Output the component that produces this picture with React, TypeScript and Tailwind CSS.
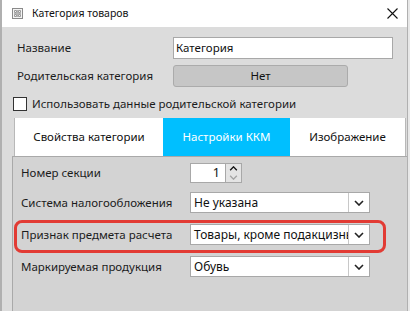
import type { ReactNode } from 'react';

// Category editor dialog — KKM settings tab, with a red annotation round one row.

const font = { fontFamily: '"Noto Sans", "Open Sans", sans-serif' };

function Chevron({ className = '' }: { className?: string }) {
  return (
    <svg width="10" height="6" viewBox="0 0 10 6" className={className} aria-hidden>
      <path d="M1 1 L5 5 L9 1" fill="none" stroke="currentColor" strokeWidth="1.6" />
    </svg>
  );
}

function Select({ value }: { value: string }) {
  return (
    <div className="flex h-[21px] w-[180px] items-stretch border border-[#a8a8a8] bg-white">
      <div className="flex-1 overflow-hidden whitespace-nowrap pl-[3px] text-[12px] leading-[19px] text-[#111]">
        {value}
      </div>
      <div className="flex w-[21px] items-center justify-center border-l border-[#c8c8c8] text-[#222]">
        <Chevron />
      </div>
    </div>
  );
}

function Row({ label, children, className = '' }: { label: string; children: ReactNode; className?: string }) {
  return (
    <div className={`flex items-center ${className}`}>
      <div className="w-[177px] whitespace-nowrap pl-[8px] text-[11.5px] text-[#1c1c1c]">{label}</div>
      {children}
    </div>
  );
}

export default function App() {
  return (
    <div className="flex h-[311px] w-[410px] overflow-hidden bg-[#e8e8e8]" style={font}>
      <div className="flex w-[408px] flex-col border-l-2 border-r border-[#b0b0b0] bg-[#dcdcdc]">
        {/* title bar */}
        <div className="flex h-[27px] items-center bg-white pl-[10px] pr-[9px]">
          <svg width="11" height="11" viewBox="0 0 11 11" aria-hidden>
            <rect x="0.5" y="0.5" width="10" height="10" fill="#f4f4f4" stroke="#8a8a8a" />
            <path d="M2.5 2.5h2v2h-2zM6.5 2.5h2v2h-2zM2.5 6.5h2v2h-2zM6.5 6.5h2v2h-2z" fill="none" stroke="#9a9a9a" />
            <path d="M5.5 2v7M2 5.5h7" stroke="#b5b5b5" />
          </svg>
          <span className="ml-[9px] text-[10.5px] text-[#111]">Категория товаров</span>
          <svg width="11" height="11" viewBox="0 0 11 11" className="ml-auto" aria-hidden>
            <path d="M0.5 0.5L10.5 10.5M10.5 0.5L0.5 10.5" stroke="#111" strokeWidth="1.1" />
          </svg>
        </div>

        {/* header fields */}
        <div className="flex flex-col pt-[10px]">
          <div className="flex h-[22px] items-center">
            <div className="w-[171px] whitespace-nowrap pl-[15px] text-[11.5px] text-[#1c1c1c]">Название</div>
            <div className="h-[22px] w-[220px] border border-[#a8a8a8] bg-white pl-[2px] text-[11.5px] leading-[19px] text-[#111]">
              Категория
            </div>
          </div>
          <div className="mt-[6px] flex h-[22px] items-center">
            <div className="w-[171px] whitespace-nowrap pl-[15px] text-[11.5px] text-[#1c1c1c]">Родительская категория</div>
            <div className="flex h-[22px] w-[175px] items-center justify-center rounded-[3px] border border-[#ababab] bg-[#c6c6c6] text-[11.5px] text-[#111]">
              Нет
            </div>
          </div>
          <div className="mt-[10px] flex h-[14px] items-center pl-[11px]">
            <div className="h-[14px] w-[14px] border border-[#333] bg-white" />
            <span className="ml-[5px] whitespace-nowrap text-[11.5px] text-[#1c1c1c]">Использовать данные родительской категории</span>
          </div>
        </div>

        {/* tabs */}
        <div className="mt-[7px] flex h-[38px] pl-[12px]">
          <div className="flex w-[149px] items-center justify-center border-l border-[#b8b8b8] bg-white text-[11.5px] text-[#111]">
            Свойства категории
          </div>
          <div className="flex w-[127px] items-center justify-center bg-[#00bfff] text-[11.5px] text-white">
            Настройки ККМ
          </div>
          <div className="flex w-[116px] items-center justify-center border-r border-[#b8b8b8] bg-white text-[11.5px] text-[#111]">
            Изображение
          </div>
        </div>

        {/* panel */}
        <div className="relative ml-[10px] flex-1 border-l border-t border-[#a9a9a9] bg-[#d3d3d3] pt-[6px]">
          <Row label="Номер секции" className="h-[20px]">
            <div className="flex h-[20px] items-stretch">
              <div className="w-[36px] border border-[#a8a8a8] bg-white pr-[5px] text-right text-[12.5px] leading-[18px] text-[#111]">
                1
              </div>
              <div className="flex w-[16px] flex-col border-y border-r border-[#a8a8a8] bg-[#e4e4e4]">
                <div className="flex flex-1 items-center justify-center text-[#111]">
                  <Chevron className="h-[5px] w-[9px] rotate-180" />
                </div>
                <div className="flex flex-1 items-center justify-center text-[#a4a4a4]">
                  <Chevron className="h-[5px] w-[9px]" />
                </div>
              </div>
            </div>
          </Row>
          <Row label="Система налогообложения" className="mt-[9px]">
            <Select value="Не указана" />
          </Row>
          <Row label="Признак предмета расчета" className="mt-[11px]">
            <Select value="Товары, кроме подакцизных" />
          </Row>
          <Row label="Маркируемая продукция" className="mt-[11px]">
            <Select value="Обувь" />
          </Row>

          <div className="absolute left-[1px] top-[63px] h-[33px] w-[372px] rounded-[8px] border-[3px] border-[#e23b34]" />
        </div>
      </div>
    </div>
  );
}
